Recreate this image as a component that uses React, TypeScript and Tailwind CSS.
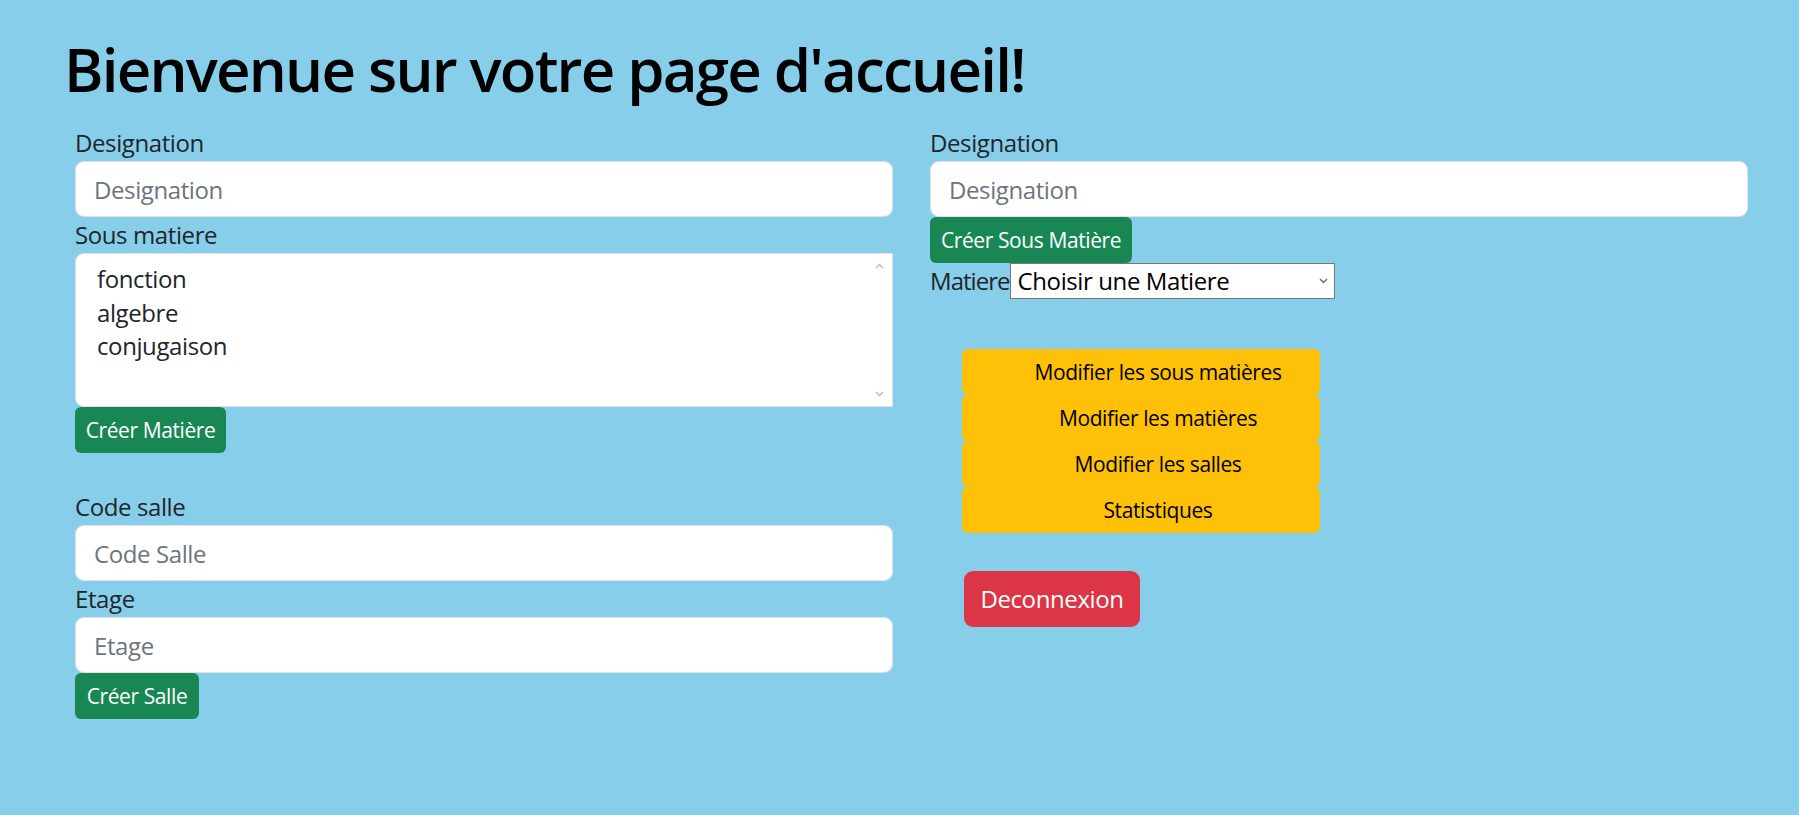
import React from "react";

function Chevron({ up = false, className = "" }: { up?: boolean; className?: string }) {
  return (
    <svg width="9" height="6" viewBox="0 0 9 6" className={className}>
      <path
        d={up ? "M1 5 L4.5 1.5 L8 5" : "M1 1 L4.5 4.5 L8 1"}
        fill="none"
        stroke="currentColor"
        strokeWidth="1.5"
      />
    </svg>
  );
}

function Label({ children }: { children: React.ReactNode }) {
  return <label className="block text-[24px] leading-[36px] text-[#212529]">{children}</label>;
}

function TextInput({ placeholder }: { placeholder: string }) {
  return (
    <input
      type="text"
      placeholder={placeholder}
      className="block h-[56px] w-full rounded-[9px] border border-[#dee2e6] bg-white px-[18px] text-[24px] text-[#212529] outline-none placeholder:text-[#6c757d]"
    />
  );
}

function GreenButton({ children, w }: { children: React.ReactNode; w: string }) {
  return (
    <button
      className={`block h-[46px] ${w} rounded-[6px] bg-[#198754] text-center text-[21px] leading-[46px] text-white`}
    >
      {children}
    </button>
  );
}

function YellowButton({ children }: { children: React.ReactNode }) {
  return (
    <button className="block h-[46px] w-[358px] rounded-[6px] bg-[#ffc107] pl-[34px] text-center text-[21px] leading-[46px] text-black">
      {children}
    </button>
  );
}

export default function App() {
  return (
    <div className="min-h-screen bg-[#87ceeb] font-['Open_Sans','Noto_Sans',sans-serif] tracking-[-0.025em] text-[#212529]">
      <h1 className="pl-[64px] pt-[33px] text-[60px] font-semibold leading-[72px] tracking-[-0.03em] text-black">
        Bienvenue sur votre page d'accueil!
      </h1>
      <div className="mt-[20px] flex gap-[37px] pl-[75px]">
        {/* Left column */}
        <div className="flex w-[818px] flex-col">
          <Label>Designation</Label>
          <TextInput placeholder="Designation" />
          <Label>Sous matiere</Label>
          <div
            role="listbox"
            className="relative h-[154px] w-full rounded-l-[9px] border border-[#dee2e6] bg-white pl-[21px] pt-[8px] text-[24px] leading-[33.5px] text-[#212529]"
          >
            <div>fonction</div>
            <div>algebre</div>
            <div>conjugaison</div>
            <Chevron up className="absolute right-[8px] top-[9px] text-[#bdbdbd]" />
            <Chevron className="absolute bottom-[9px] right-[8px] text-[#bdbdbd]" />
          </div>
          <GreenButton w="w-[151px]">Créer Matière</GreenButton>
          <div className="h-[36px]" />
          <Label>Code salle</Label>
          <TextInput placeholder="Code Salle" />
          <Label>Etage</Label>
          <TextInput placeholder="Etage" />
          <GreenButton w="w-[124px]">Créer Salle</GreenButton>
        </div>

        {/* Right column */}
        <div className="flex w-[818px] flex-col">
          <Label>Designation</Label>
          <TextInput placeholder="Designation" />
          <GreenButton w="w-[202px]">Créer Sous Matière</GreenButton>
          <div className="flex items-start">
            <span className="text-[24px] leading-[36px] tracking-[-0.04em] text-[#212529]">Matiere</span>
            <div className="relative h-[36px] w-[325px] border border-[#767676] bg-white">
              <div className="pl-[7px] text-[24px] leading-[34px] text-black">Choisir une Matiere</div>
              <Chevron className="absolute right-[6px] top-[14px] text-[#6f6f6f]" />
            </div>
          </div>
          <div className="mt-[50px] flex flex-col pl-[32px]">
            <YellowButton>Modifier les sous matières</YellowButton>
            <YellowButton>Modifier les matières</YellowButton>
            <YellowButton>Modifier les salles</YellowButton>
            <YellowButton>Statistiques</YellowButton>
          </div>
          <div className="mt-[38px] pl-[34px]">
            <button className="block h-[56px] w-[176px] rounded-[9px] bg-[#dc3545] text-center text-[24px] leading-[56px] text-white">
              Deconnexion
            </button>
          </div>
        </div>
      </div>
    </div>
  );
}
